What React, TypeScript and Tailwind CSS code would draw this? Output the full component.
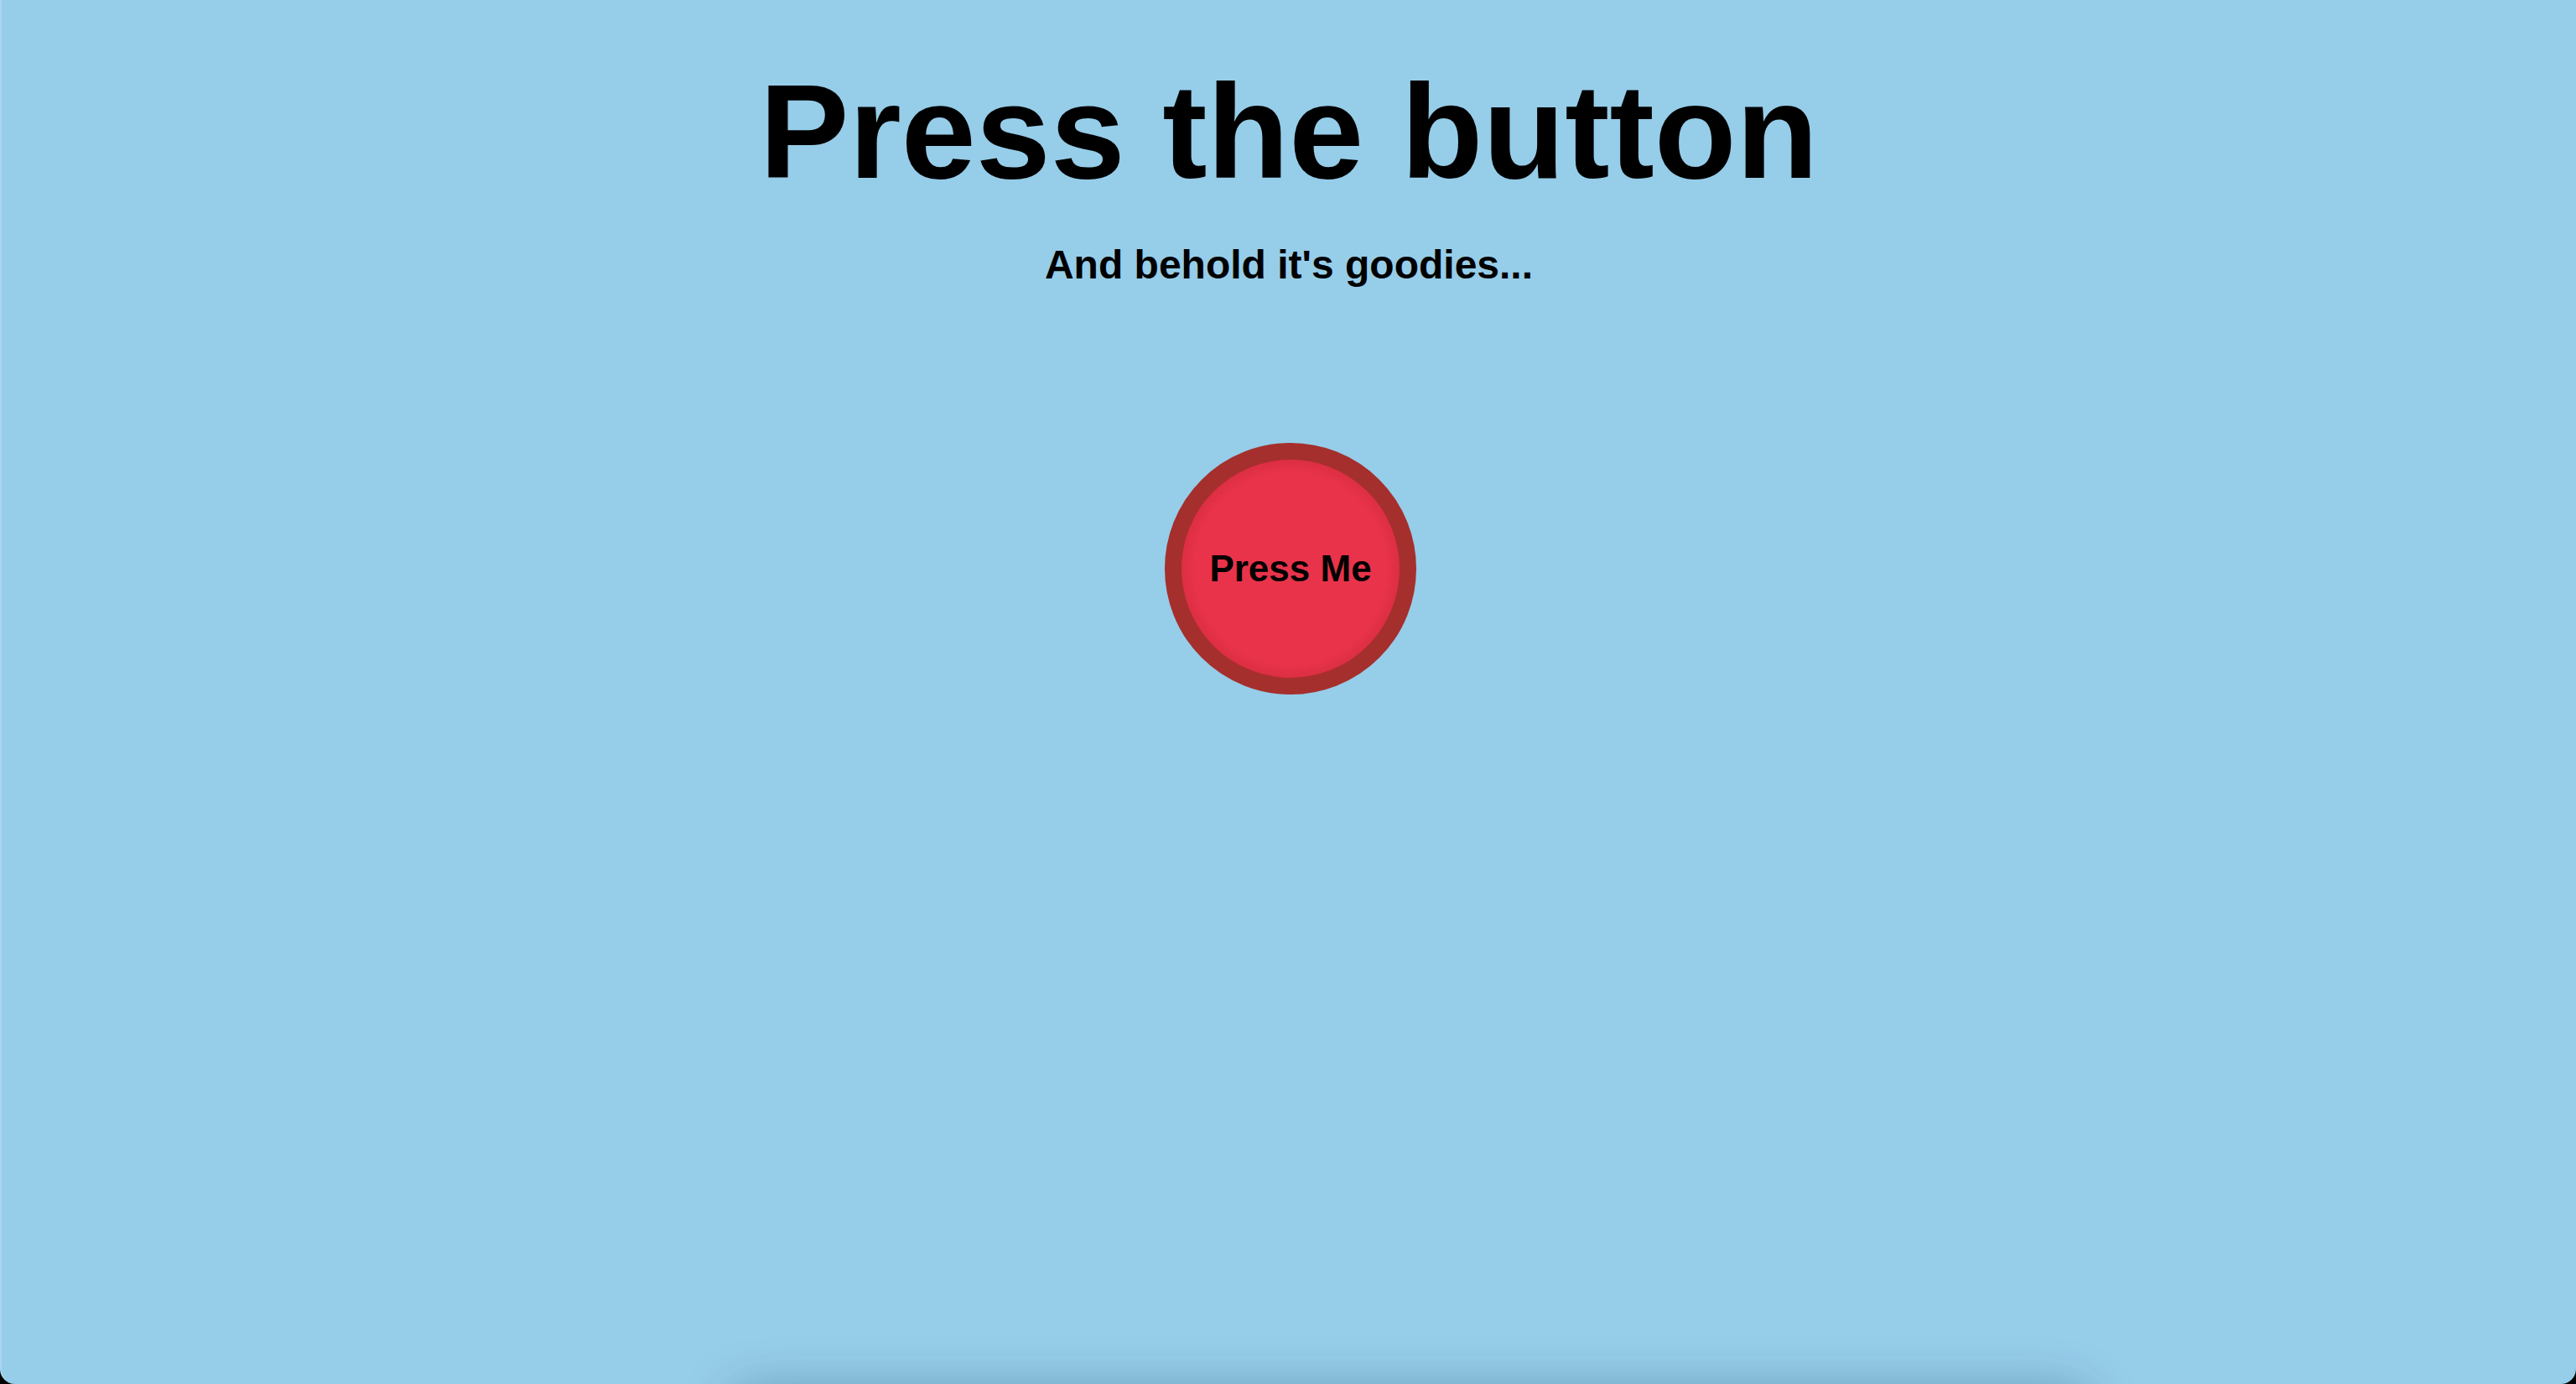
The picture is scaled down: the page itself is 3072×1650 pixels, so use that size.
import React from "react";

export default function App() {
  return (
    <div className="w-[3072px] h-[1650px] bg-black overflow-hidden">
      <div
        className="w-full h-full bg-[#96cde9] rounded-b-[18px] border-l-2 border-[#a8d6ee] flex flex-col items-center overflow-hidden"
        style={{ fontFamily: '"Liberation Sans", Arial, Helvetica, sans-serif' }}
      >
        <h1 className="mt-[77px] text-[160px] leading-none font-bold text-black">Press the button</h1>
        <h3 className="mt-[55px] text-[48px] leading-none font-bold text-black">And behold it's goodies...</h3>
        <button className="mt-[188px] ml-[4px] w-[300px] h-[300px] shrink-0 rounded-full border-[20px] border-[#a52f2c] bg-[radial-gradient(circle,#e9334a_0%,#e9334a_62%,#b01f2e_100%)] flex items-center justify-center text-[44px] font-bold text-black leading-none">
          Press Me
        </button>
        <div className="mt-[842px] self-start ml-[880px] w-[1600px] h-[200px] shrink-0 rounded-[20px] shadow-[0_0_60px_10px_rgba(0,40,70,0.35)]" />
      </div>
    </div>
  );
}
